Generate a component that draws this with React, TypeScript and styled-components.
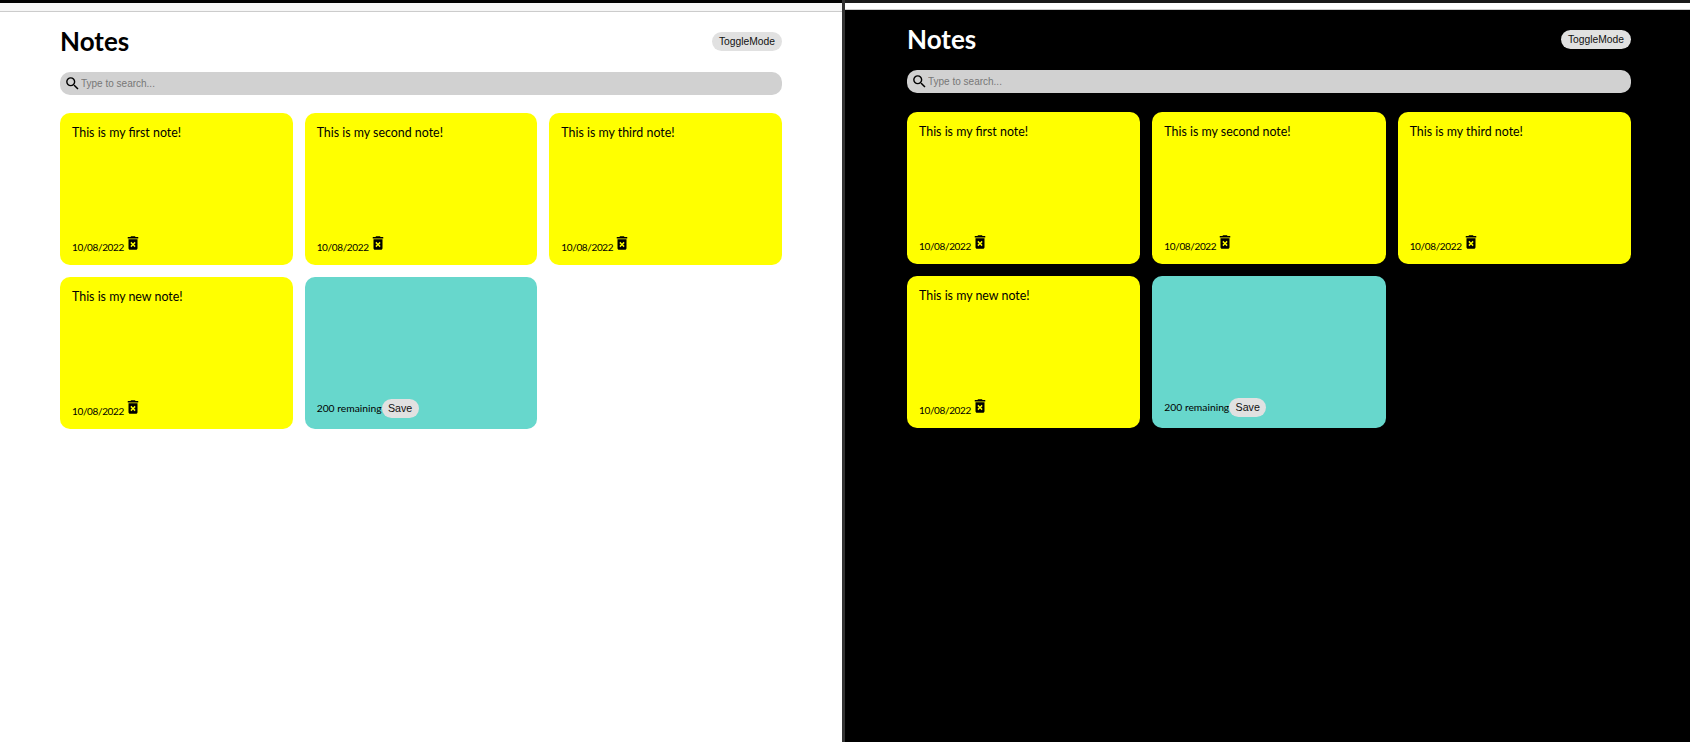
import * as React from 'react';

import styled, { createGlobalStyle } from 'styled-components';
import { MdDeleteForever, MdSearch } from 'react-icons/md';

const GlobalStyle = createGlobalStyle`
  html, body {
    margin: 0;
    padding: 0;
    height: 100%;
    overflow: hidden;
    background: #fff;
  }
`;

const Shot = styled.div`
  display: flex;
  width: 1690px;
  height: 742px;
  font-family: Lato, 'Noto Sans', sans-serif;
`;

const Pane = styled.div<{ $dark?: boolean }>`
  display: flex;
  flex-direction: column;
  box-sizing: border-box;
  height: 100%;
  width: ${(p) => (p.$dark ? '848px' : '842px')};
  background: ${(p) => (p.$dark ? '#000' : '#fff')};
  border-left: ${(p) => (p.$dark ? '3px solid #333' : 'none')};
`;

const TopStrip = styled.div<{ $dark?: boolean }>`
  flex: none;
  box-sizing: border-box;
  height: ${(p) => (p.$dark ? '10px' : '12px')};
  background: ${(p) =>
    p.$dark
      ? 'linear-gradient(#1a1a1a 0 3px, #fff 3px 9px, #ccc 9px)'
      : 'linear-gradient(#000 0 3px, #f6f6f6 3px 11px, #ccc 11px)'};
`;

const Container = styled.div<{ $dark?: boolean }>`
  box-sizing: border-box;
  width: ${(p) => (p.$dark ? '724px' : '722px')};
  margin-left: ${(p) => (p.$dark ? '62px' : '60px')};
`;

const Header = styled.div`
  display: flex;
  align-items: center;
  justify-content: space-between;
  height: 36px;
  margin-top: 11px;
`;

const Title = styled.h1<{ $dark?: boolean }>`
  margin: 0;
  font-size: 26px;
  font-weight: 700;
  line-height: 32px;
  color: ${(p) => (p.$dark ? '#fff' : '#000')};
`;

const Pill = styled.button`
  box-sizing: border-box;
  border: none;
  border-radius: 15px;
  background: #e1e1e1;
  color: #111;
  font-family: 'Liberation Sans', Arial, sans-serif;
  font-size: 10.3px;
  line-height: 13px;
  padding: 0;
  height: 19px;
`;

const ToggleButton = styled(Pill)`
  width: 70px;
`;

const SaveButton = styled(Pill)`
  width: 37px;
  font-size: 10.67px;
`;

const SearchBar = styled.div`
  display: flex;
  align-items: center;
  height: 23px;
  margin-top: 13px;
  padding: 0 4px;
  border-radius: 10px;
  background: #d1d1d1;
`;

const SearchInput = styled.input`
  flex: 1;
  border: none;
  outline: none;
  padding: 0;
  background: transparent;
  font-family: 'Liberation Sans', Arial, sans-serif;
  font-size: 10px;
  color: #111;

  &::placeholder {
    color: #777;
  }
`;

const NotesGrid = styled.div<{ $dark?: boolean }>`
  display: grid;
  grid-template-columns: repeat(3, 1fr);
  gap: 12px;
  margin-top: ${(p) => (p.$dark ? '19px' : '18px')};
`;

const Card = styled.div<{ $new?: boolean }>`
  display: flex;
  flex-direction: column;
  justify-content: space-between;
  box-sizing: border-box;
  height: 152px;
  padding: 11px 12px ${(p) => (p.$new ? '11px' : '13px')};
  border-radius: 10px;
  background: ${(p) => (p.$new ? '#67d7cc' : '#ffff00')};
  color: #000;
`;

const NoteText = styled.span`
  font-size: 12.4px;
  line-height: 18px;
`;

const Footer = styled.div`
  display: flex;
  align-items: center;
  font-size: 10.3px;
  line-height: 19px;
`;

const DateText = styled.small`
  font-size: 10px;
  letter-spacing: -0.35px;
  position: relative;
  top: 5px;
`;

const TrashIcon = styled(MdDeleteForever)`
  display: block;
  flex: none;
`;

const notes = [
  'This is my first note!',
  'This is my second note!',
  'This is my third note!',
  'This is my new note!',
];

const NotesPage = ({ dark }: { dark?: boolean }) => (
  <Pane $dark={dark}>
    <TopStrip $dark={dark} />
    <Container $dark={dark}>
      <Header>
        <Title $dark={dark}>Notes</Title>
        <ToggleButton>ToggleMode</ToggleButton>
      </Header>
      <SearchBar>
        <MdSearch size={17} color="#000" />
        <SearchInput placeholder="Type to search..." readOnly />
      </SearchBar>
      <NotesGrid $dark={dark}>
        {notes.map((text) => (
          <Card key={text}>
            <NoteText>{text}</NoteText>
            <Footer>
              <DateText>10/08/2022</DateText>
              <TrashIcon size={18} />
            </Footer>
          </Card>
        ))}
        <Card $new>
          <span />
          <Footer>
            <span>200 remaining</span>
            <SaveButton>Save</SaveButton>
          </Footer>
        </Card>
      </NotesGrid>
    </Container>
  </Pane>
);

export default function App() {
  return (
    <Shot>
      <GlobalStyle />
      <NotesPage />
      <NotesPage dark />
    </Shot>
  );
}
